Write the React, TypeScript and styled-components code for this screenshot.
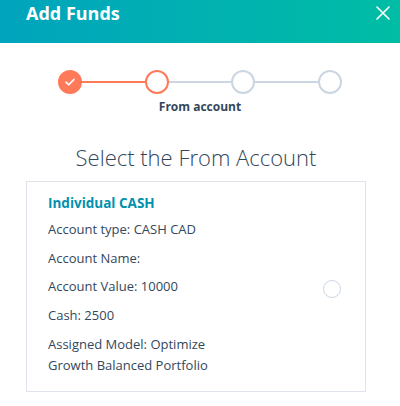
import { Fragment } from "react";
import styled, { createGlobalStyle } from "styled-components";

const GlobalStyle = createGlobalStyle`
  html, body {
    margin: 0;
    padding: 0;
    background: #ffffff;
  }
  body {
    font-family: "Open Sans", "Noto Sans", sans-serif;
    color: #33475b;
    -webkit-font-smoothing: antialiased;
  }
`;

interface Step {
  label: string;
  state: "done" | "active" | "todo";
}

const steps: Step[] = [
  { label: "Amount", state: "done" },
  { label: "From account", state: "active" },
  { label: "To account", state: "todo" },
  { label: "Review", state: "todo" },
];

const accountLines = [
  "Account type: CASH CAD",
  "Account Name:",
  "Account Value: 10000",
  "Cash: 2500",
  "Assigned Model: Optimize Growth Balanced Portfolio",
];

const Modal = styled.div`
  width: 400px;
  height: 406px;
  overflow: hidden;
  background: #fff;
`;

const Header = styled.header`
  height: 43px;
  box-sizing: border-box;
  display: flex;
  align-items: flex-start;
  justify-content: space-between;
  padding: 0 10px 0 26px;
  background: linear-gradient(90deg, #00a4bd 0%, #00bda5 100%);
`;

const Title = styled.h1`
  margin: 0;
  font-size: 18px;
  line-height: 26px;
  font-weight: 700;
  color: #fff;
`;

const CloseButton = styled.button`
  margin-top: 6px;
  padding: 0;
  border: none;
  background: none;
  width: 14px;
  height: 14px;
  cursor: pointer;
  display: flex;
`;

const Stepper = styled.div`
  width: 284px;
  margin: 27px auto 0;
  display: flex;
  align-items: center;
`;

const StepCircle = styled.div<{ $state: Step["state"] }>`
  width: 24px;
  height: 24px;
  flex: none;
  box-sizing: border-box;
  border-radius: 50%;
  display: flex;
  align-items: center;
  justify-content: center;
  border: 2px solid ${(p) => (p.$state === "todo" ? "#cbd6e2" : "#ff7a59")};
  background: ${(p) => (p.$state === "done" ? "#ff7a59" : "#fff")};
`;

const StepLine = styled.div<{ $done: boolean }>`
  flex: 1;
  height: 2px;
  background: ${(p) => (p.$done ? "#ff7a59" : "#cbd6e2")};
`;

const StepLabel = styled.div`
  margin-top: 4px;
  text-align: center;
  font-size: 12px;
  line-height: 18px;
  font-weight: 700;
  color: #33475b;
`;

const Body = styled.div`
  padding: 0 34px 0 26px;
`;

const Heading = styled.h2`
  margin: 26px 0 9px;
  text-align: center;
  font-size: 22px;
  line-height: 30px;
  font-weight: 300;
  color: #33475b;
`;

const Card = styled.label`
  display: flex;
  align-items: center;
  height: 211px;
  box-sizing: border-box;
  padding: 11px 24px 0 21px;
  border: 1px solid #dfe3eb;
  cursor: pointer;
`;

const CardInfo = styled.div`
  flex: 1;
  align-self: flex-start;
`;

const AccountTitle = styled.div`
  font-size: 13.5px;
  line-height: 20px;
  font-weight: 700;
  color: #0091ae;
  margin-bottom: 6px;
`;

const InfoLine = styled.p`
  margin: 0 0 8px;
  width: 180px;
  font-size: 13px;
  line-height: 20.7px;
  color: #33475b;
`;

const Radio = styled.span`
  width: 18px;
  height: 18px;
  margin-bottom: 6px;
  box-sizing: border-box;
  border-radius: 50%;
  border: 1px solid #cbd6e2;
  background: #fff;
  flex: none;
`;

export default function App() {
  const activeIndex = steps.findIndex((s) => s.state === "active");
  return (
    <Modal>
      <GlobalStyle />
      <Header>
        <Title>Add Funds</Title>
        <CloseButton aria-label="Close">
          <svg width="14" height="14" viewBox="0 0 14 14">
            <path d="M1 1 L13 13 M13 1 L1 13" stroke="#fff" strokeWidth="1.6" strokeLinecap="round" />
          </svg>
        </CloseButton>
      </Header>

      <Stepper>
        {steps.map((step, i) => (
          <Fragment key={step.label}>
            {i > 0 && <StepLine $done={i <= activeIndex} />}
            <StepCircle $state={step.state}>
              {step.state === "done" && (
                <svg width="12" height="10" viewBox="0 0 12 10">
                  <path d="M2 5.2 L4.8 7.8 L10 2.4" fill="none" stroke="#fff" strokeWidth="1.6" strokeLinecap="round" strokeLinejoin="round" />
                </svg>
              )}
            </StepCircle>
          </Fragment>
        ))}
      </Stepper>
      <StepLabel>{steps[activeIndex].label}</StepLabel>

      <Body>
        <Heading>Select the From Account</Heading>
        <Card>
          <CardInfo>
            <AccountTitle>Individual CASH</AccountTitle>
            {accountLines.map((line) => (
              <InfoLine key={line}>{line}</InfoLine>
            ))}
          </CardInfo>
          <Radio />
        </Card>
      </Body>
    </Modal>
  );
}
